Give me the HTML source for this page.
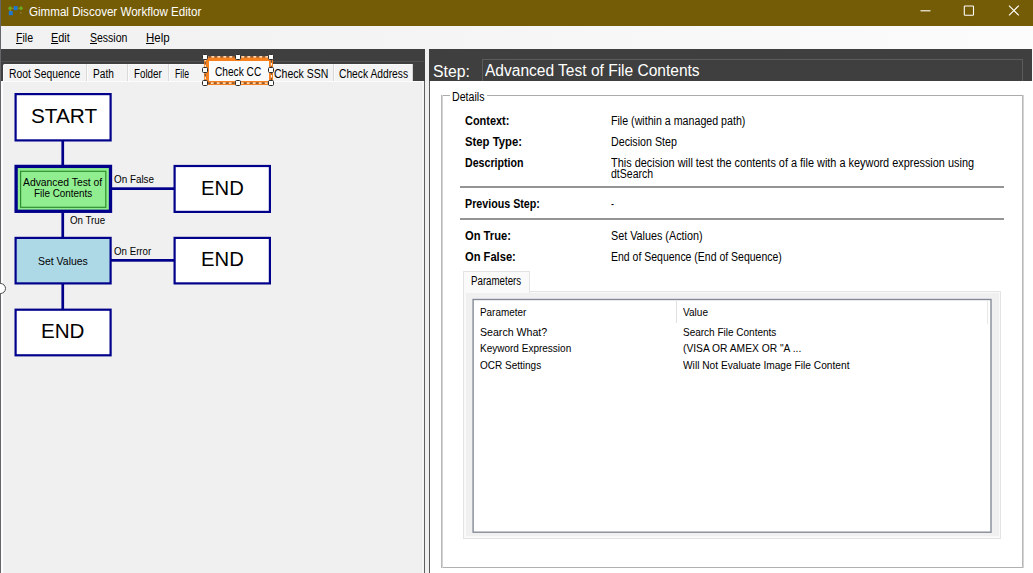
<!DOCTYPE html>
<html><head><meta charset="utf-8">
<style>
*{box-sizing:border-box;margin:0;padding:0}
html,body{width:1033px;height:573px;overflow:hidden;background:#f0f0f0;font-family:"Liberation Sans",sans-serif;}
div,span,svg{position:absolute}
.t{white-space:nowrap;transform-origin:0 0;color:#000}
.t u{position:static;text-decoration:underline;text-underline-offset:1px}
.tab{top:63.7px;height:17.3px;background:#f3f3f3;border-left:1px solid #fff;border-top:1px solid #fff;border-right:1px solid #d6d6d6;border-radius:2px 2px 0 0}
.sep{top:64px;width:2px;height:17px;background:linear-gradient(90deg,#d9d9d9 50%,#fcfcfc 50%)}
.box{background:#fff;border:2px solid #00008b;}
.ln{background:#00008b}
.h{width:6.2px;height:6.2px;background:#fff;border:1.2px solid #2a2a2a;border-radius:1.6px}
</style></head><body>
<!-- title bar -->
<div style="left:0;top:0;width:1033px;height:26px;background:#745b05"></div>
<svg style="left:0;top:0" width="40" height="26" viewBox="0 0 40 26">
<path d="M10.1 6 L12.4 8.2 L10.1 10.4 L7.8 8.2Z" fill="#6aa820"/><path d="M20.9 6 L23.2 8.2 L20.9 10.4 L18.6 8.2Z" fill="#6aa820"/>
<rect x="13.8" y="6.1" width="3.8" height="4.1" fill="#1c78d0"/><rect x="8.8" y="11.1" width="4" height="4.1" fill="#1c78d0"/>
<rect x="20.4" y="12.4" width="1" height="1" fill="#b0a880"/><path d="M10.2 10 V11.2 M12.4 8.2 H13.8 M17.6 8.2 H18.6" stroke="#c8c090" stroke-width="0.6"/>
</svg>
<svg style="left:915px;top:0" width="118" height="26" viewBox="915 0 118 26"><path d="M920.5 10.8 H930.5" stroke="#fff" stroke-width="1.1" fill="none"/><rect x="964.3" y="6" width="9.2" height="9.2" rx="0.8" stroke="#fff" stroke-width="1.1" fill="none"/><path d="M1009 5.6 L1018.8 15.4 M1018.8 5.6 L1009 15.4" stroke="#fff" stroke-width="1.1" fill="none"/></svg>
<!-- menu -->
<div style="left:0;top:26px;width:1033px;height:23px;background:linear-gradient(90deg,#f1f1f1 0%,#f4f4f4 35%,#fcfcfc 100%)"></div>
<!-- left dark -->
<div style="left:0;top:49.4px;width:424.6px;height:524px;background:#3f3f3f"></div>
<div style="left:1px;top:60.6px;width:423px;height:1px;background:#505050"></div>
<!-- splitter -->
<div style="left:424.6px;top:49.4px;width:4.4px;height:524px;background:#f0f0f0"></div>
<!-- right dark header -->
<div style="left:429px;top:49.4px;width:603.3px;height:31.5px;background:#3f3f3f"></div>
<div style="left:1032.3px;top:49.4px;width:1px;height:31.5px;background:#f8f8f8"></div>
<!-- right white -->
<div style="left:429px;top:80.9px;width:604px;height:493px;background:#fff;border-left:1px solid #5a5a5a"></div>
<!-- tab page left -->
<div style="left:1px;top:80.9px;width:422.8px;height:493px;background:#f0f0f0;border-left:2px solid #fcfcfc;border-top:1px solid #fcfcfc"></div>
<div style="left:420.8px;top:82px;width:3px;height:492px;background:linear-gradient(90deg,#e4e4e4,#f8f8f8 40%,#f4f4f4)"></div>
<div style="left:0;top:0;width:1px;height:573px;background:#66666a"></div>
<div style="left:424px;top:81px;width:1px;height:492px;background:#606060"></div>
<!-- tabs -->
<div style="left:3px;top:64px;width:410px;height:17px;background:#f3f3f3;border-top:1px solid #fafafa;border-left:1px solid #fbfbfb;border-radius:1.5px 1.5px 0 0"></div>
<div class="sep" style="left:86px"></div><div class="sep" style="left:127px"></div><div class="sep" style="left:168px"></div><div class="sep" style="left:333px"></div>
<div style="left:412px;top:64px;width:1px;height:17px;background:#d4d4d4"></div>
<!-- selected tab with selection adorner -->
<div style="left:203.7px;top:55.6px;width:69.6px;height:29.8px;background:#f8811f;border-radius:1px"></div>
<div style="left:208.6px;top:60.8px;width:60.4px;height:20.6px;background:#fbfbfb"></div>
<svg style="left:200px;top:52px" width="78" height="38" viewBox="200 52 78 38"><rect x="205.3" y="56.9" width="66.1" height="26.2" fill="none" stroke="#fff3e6" stroke-width="1.1" stroke-dasharray="3 3"/><rect x="205.3" y="56.9" width="66.1" height="26.2" fill="none" stroke="#5a4a40" stroke-width="1.1" opacity="0.85" stroke-dasharray="3 3" stroke-dashoffset="3"/></svg>
<div class="h" style="left:202.2px;top:53.6px"></div><div class="h" style="left:235.2px;top:53.6px"></div><div class="h" style="left:268.3px;top:53.6px"></div><div class="h" style="left:202.2px;top:66.9px"></div><div class="h" style="left:268.3px;top:66.9px"></div><div class="h" style="left:202.2px;top:80.0px"></div><div class="h" style="left:235.2px;top:80.0px"></div><div class="h" style="left:268.3px;top:80.0px"></div>
<!-- splitter circle -->
<div style="left:-6px;top:282.5px;width:11.6px;height:11.6px;border-radius:50%;border:1.5px solid #4c4c4c;background:#fff"></div>
<!-- flow -->
<svg style="left:0;top:85px" width="300" height="280" viewBox="0 85 300 280">
<g fill="#00008b">
<rect x="61.4" y="141" width="2.7" height="24.5"/><rect x="61.4" y="212.5" width="2.7" height="25"/><rect x="61.4" y="284" width="2.7" height="25"/>
<rect x="111" y="187.3" width="63" height="2.7"/><rect x="111" y="259" width="63" height="2.7"/>
</g>
<g stroke="#00008b" stroke-width="2.2" fill="#fff">
<rect x="15.6" y="94.1" width="95" height="46.3"/>
<rect x="174.6" y="166" width="95.3" height="45.9"/>
<rect x="15.6" y="237.9" width="95" height="45.5" fill="#add8e6"/>
<rect x="174.6" y="237.9" width="95.3" height="45.5"/>
<rect x="15.6" y="309.7" width="95" height="45.6"/>
</g>
<rect x="16.1" y="166.4" width="94.4" height="44.9" fill="#90ee90" stroke="#00008b" stroke-width="3.3"/>
<rect x="20.6" y="171.3" width="85.2" height="36" fill="none" stroke="#2f8f2f" stroke-width="1.2"/>
</svg>
<!-- step textbox -->
<div style="left:482px;top:59px;width:541px;height:22px;border:1px solid #5c5c5c;border-bottom:none"></div>
<!-- group box -->
<div style="left:441px;top:95px;width:583px;height:1px;background:#ababab"></div>
<div style="left:441px;top:567px;width:583px;height:1px;background:#b0b0b0"></div>
<div style="left:441px;top:95px;width:2px;height:473px;background:linear-gradient(90deg,#b8b8b8 50%,#d4d4d4 50%)"></div>
<div style="left:1022px;top:95px;width:2px;height:473px;background:linear-gradient(90deg,#b8b8b8 50%,#d4d4d4 50%)"></div>
<div style="left:449.5px;top:90px;width:37px;height:12px;background:#fff"></div>
<!-- separators -->
<div style="left:460px;top:186px;width:544px;height:2px;background:#949494"></div>
<div style="left:460px;top:218px;width:544px;height:2px;background:#949494"></div>
<!-- inner tab control -->
<div style="left:463px;top:291px;width:538px;height:248px;border:1px solid #e4e4e4;background:#f9f9f9"></div>
<div style="left:466px;top:293px;width:533px;height:243px;background:#f0f0f0"></div>
<div style="left:463px;top:271px;width:67px;height:22px;border:1px solid #e4e4e4;border-bottom:none;background:#fafafa"></div>
<svg style="left:468px;top:294px" width="530" height="244" viewBox="468 294 530 244"><rect x="473.1" y="299.5" width="517.9" height="232.7" fill="#fff" stroke="#858a96" stroke-width="1.4"/></svg>
<div style="left:676.4px;top:301.3px;width:1px;height:22px;background:#e0e0e0"></div>
<div style="left:987.4px;top:301.3px;width:1px;height:22.5px;background:#e8e8e8"></div>
<span class="t" style="left:29.10px;top:6.00px;font-size:12px;line-height:12px;transform:scaleX(0.9659);color:#fff">Gimmal Discover Workflow Editor</span>
<span class="t" style="left:15.60px;top:32.00px;font-size:12px;line-height:12px;transform:scaleX(0.8799)"><u>F</u>ile</span>
<span class="t" style="left:51.40px;top:32.00px;font-size:12px;line-height:12px;transform:scaleX(0.9089)"><u>E</u>dit</span>
<span class="t" style="left:89.50px;top:32.00px;font-size:12px;line-height:12px;transform:scaleX(0.8758)"><u>S</u>ession</span>
<span class="t" style="left:145.70px;top:32.00px;font-size:12px;line-height:12px;transform:scaleX(0.9558)"><u>H</u>elp</span>
<span class="t" style="left:9.10px;top:68.00px;font-size:12px;line-height:12px;transform:scaleX(0.8621)">Root Sequence</span>
<span class="t" style="left:93.10px;top:68.00px;font-size:12px;line-height:12px;transform:scaleX(0.8454)">Path</span>
<span class="t" style="left:134.20px;top:68.00px;font-size:12px;line-height:12px;transform:scaleX(0.8172)">Folder</span>
<span class="t" style="left:174.80px;top:68.00px;font-size:12px;line-height:12px;transform:scaleX(0.7222)">File</span>
<span class="t" style="left:214.90px;top:66.00px;font-size:12px;line-height:12px;transform:scaleX(0.8452)">Check CC</span>
<span class="t" style="left:273.70px;top:68.00px;font-size:12px;line-height:12px;transform:scaleX(0.8769)">Check SSN</span>
<span class="t" style="left:339.30px;top:68.00px;font-size:12px;line-height:12px;transform:scaleX(0.8554)">Check Address</span>
<span class="t" style="left:30.50px;top:106.00px;font-size:20px;line-height:20px;transform:scaleX(1.0379)">START</span>
<span class="t" style="left:200.99px;top:178.00px;font-size:20px;line-height:20px;transform:scaleX(1.0127)">END</span>
<span class="t" style="left:200.99px;top:249.00px;font-size:20px;line-height:20px;transform:scaleX(1.0127)">END</span>
<span class="t" style="left:41.37px;top:321.00px;font-size:20px;line-height:20px;transform:scaleX(1.0298)">END</span>
<span class="t" style="left:23.10px;top:178.00px;font-size:10px;line-height:10px;transform:scaleX(1.0346)">Advanced Test of</span>
<span class="t" style="left:33.60px;top:189.00px;font-size:10px;line-height:10px;transform:scaleX(0.9878)">File Contents</span>
<span class="t" style="left:38.00px;top:256.00px;font-size:10.5px;line-height:10.5px;transform:scaleX(0.9969)">Set Values</span>
<span class="t" style="left:113.70px;top:174.00px;font-size:10.5px;line-height:10.5px;transform:scaleX(0.9401)">On False</span>
<span class="t" style="left:70.30px;top:215.00px;font-size:10.5px;line-height:10.5px;transform:scaleX(0.9273)">On True</span>
<span class="t" style="left:113.70px;top:246.00px;font-size:10.5px;line-height:10.5px;transform:scaleX(0.9249)">On Error</span>
<span class="t" style="left:432.90px;top:64.00px;font-size:16px;line-height:16px;transform:scaleX(0.9857);color:#fff">Step:</span>
<span class="t" style="left:484.60px;top:63.00px;font-size:16px;line-height:16px;transform:scaleX(0.9704);color:#fff">Advanced Test of File Contents</span>
<span class="t" style="left:451.80px;top:91.00px;font-size:12px;line-height:12px;transform:scaleX(0.8860)">Details</span>
<span class="t" style="left:465.20px;top:115.00px;font-size:12px;line-height:12px;transform:scaleX(0.9126);font-weight:bold">Context:</span>
<span class="t" style="left:611.00px;top:115.00px;font-size:12px;line-height:12px;transform:scaleX(0.8876)">File (within a managed path)</span>
<span class="t" style="left:465.20px;top:136.00px;font-size:12px;line-height:12px;transform:scaleX(0.9419);font-weight:bold">Step Type:</span>
<span class="t" style="left:611.00px;top:136.00px;font-size:12px;line-height:12px;transform:scaleX(0.8902)">Decision Step</span>
<span class="t" style="left:465.20px;top:157.00px;font-size:12px;line-height:12px;transform:scaleX(0.8846);font-weight:bold">Description</span>
<span class="t" style="left:611.00px;top:157.00px;font-size:12px;line-height:12px;transform:scaleX(0.9086)">This decision will test the contents of a file with a keyword expression using</span>
<span class="t" style="left:611.00px;top:168.00px;font-size:12px;line-height:12px;transform:scaleX(0.8764)">dtSearch</span>
<span class="t" style="left:465.20px;top:198.00px;font-size:12px;line-height:12px;transform:scaleX(0.8913);font-weight:bold">Previous Step:</span>
<span class="t" style="left:611.00px;top:198.00px;font-size:12px;line-height:12px;transform:scaleX(0.7500)">-</span>
<span class="t" style="left:465.20px;top:230.00px;font-size:12px;line-height:12px;transform:scaleX(0.9309);font-weight:bold">On True:</span>
<span class="t" style="left:610.70px;top:230.00px;font-size:12px;line-height:12px;transform:scaleX(0.8986)">Set Values (Action)</span>
<span class="t" style="left:465.20px;top:251.00px;font-size:12px;line-height:12px;transform:scaleX(0.9295);font-weight:bold">On False:</span>
<span class="t" style="left:610.70px;top:251.00px;font-size:12px;line-height:12px;transform:scaleX(0.8738)">End of Sequence (End of Sequence)</span>
<span class="t" style="left:471.00px;top:275.00px;font-size:12px;line-height:12px;transform:scaleX(0.8094)">Parameters</span>
<span class="t" style="left:480.10px;top:307.00px;font-size:11px;line-height:11px;transform:scaleX(0.8996)">Parameter</span>
<span class="t" style="left:683.40px;top:307.00px;font-size:11px;line-height:11px;transform:scaleX(0.9155)">Value</span>
<span class="t" style="left:480.10px;top:327.00px;font-size:11px;line-height:11px;transform:scaleX(0.9643)">Search What?</span>
<span class="t" style="left:683.40px;top:327.00px;font-size:11px;line-height:11px;transform:scaleX(0.9088)">Search File Contents</span>
<span class="t" style="left:480.10px;top:343.00px;font-size:11px;line-height:11px;transform:scaleX(0.9096)">Keyword Expression</span>
<span class="t" style="left:683.40px;top:343.00px;font-size:11px;line-height:11px;transform:scaleX(0.9328)">(VISA OR AMEX OR &quot;A ...</span>
<span class="t" style="left:480.10px;top:360.00px;font-size:11px;line-height:11px;transform:scaleX(0.9093)">OCR Settings</span>
<span class="t" style="left:683.40px;top:360.00px;font-size:11px;line-height:11px;transform:scaleX(0.9261)">Will Not Evaluate Image File Content</span>
</body></html>
